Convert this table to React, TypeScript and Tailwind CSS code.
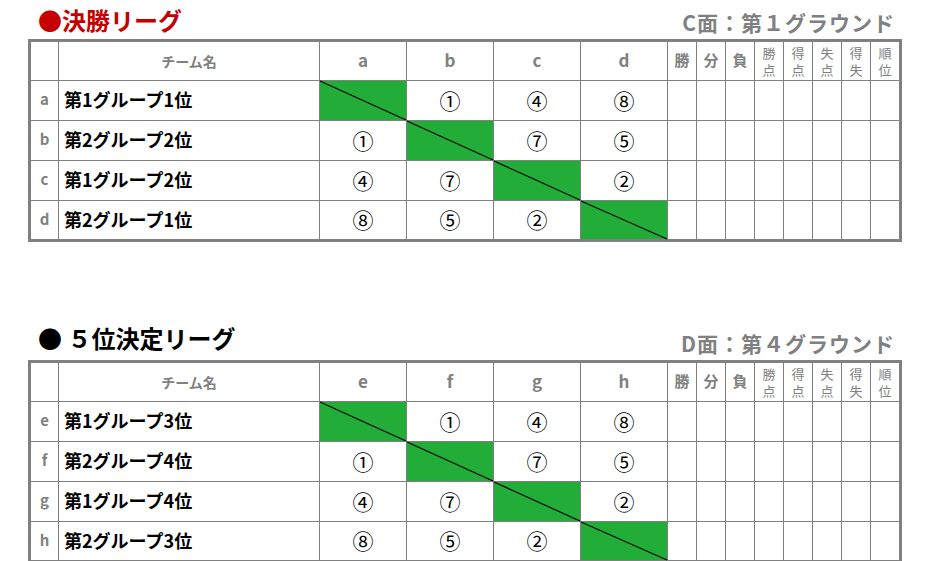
import React from "react";

const F = "font-['Noto_Sans_CJK_JP',sans-serif]";

type Sec = {
  letters: string[];
  teams: string[];
};

const matrix = [
  ["", "①", "④", "⑧"],
  ["①", "", "⑦", "⑤"],
  ["④", "⑦", "", "②"],
  ["⑧", "⑤", "②", ""],
];

function Green() {
  return (
    <div className="relative bg-[#22ac38]">
      <svg className="absolute inset-0 h-full w-full overflow-visible" viewBox="0 0 100 100" preserveAspectRatio="none">
        <line x1="0" y1="0" x2="100" y2="100" stroke="#000" strokeWidth="1.2" vectorEffect="non-scaling-stroke" />
      </svg>
    </div>
  );
}

function Table({ letters, teams }: Sec) {
  const small = [
    ["勝", "点"],
    ["得", "点"],
    ["失", "点"],
    ["得", "失"],
    ["順", "位"],
  ];
  return (
    <div className="ml-[28px] grid w-[874px] grid-cols-[27px_260px_86px_86px_86px_86px_28px_28px_28px_28px_28px_28px_28px_28px] grid-rows-[38px_39px_39px_39px_38px] gap-px border-[3px] border-[#808080] bg-[#808080]">
      <div className="bg-white" />
      <div className="flex items-center justify-center bg-white text-[14px] font-bold text-[#808080]">チーム名</div>
      {letters.map((l) => (
        <div key={l} className="flex items-center justify-center bg-white pb-[2px] text-[17px] font-bold text-[#808080]">
          {l}
        </div>
      ))}
      {["勝", "分", "負"].map((t) => (
        <div key={t} className="flex items-center justify-center bg-white pb-[2px] text-[15px] font-bold text-[#808080]">
          {t}
        </div>
      ))}
      {small.map((s, i) => (
        <div key={i} className="flex items-center justify-center bg-white text-center text-[13px] leading-[17px] text-[#808080]">
          <p className="w-[14px] break-all">{s[0] + s[1]}</p>
        </div>
      ))}
      {teams.map((t, r) => (
        <React.Fragment key={r}>
          <div className="flex items-center justify-center bg-white pb-[2px] text-[15px] font-bold text-[#808080]">{letters[r]}</div>
          <div className="flex items-center bg-white pb-[2px] pl-[5px] text-[18px] font-bold text-black">{t}</div>
          {matrix[r].map((m, c) =>
            m === "" ? (
              <Green key={c} />
            ) : (
              <div key={c} className="flex items-center justify-center bg-white pb-[1px] text-[21px] leading-none text-black">
                {m}
              </div>
            )
          )}
          {Array.from({ length: 8 }).map((_, k) => (
            <div key={"e" + k} className="bg-white" />
          ))}
        </React.Fragment>
      ))}
    </div>
  );
}

export default function App() {
  return (
    <div className={`${F} relative h-[561px] w-[929px] overflow-hidden bg-white`}>
      <div className="flex h-[39px] items-end justify-between pl-[38px] pr-[34px]">
        <div className="pb-[4px] text-[24px] font-bold leading-[30px] text-[#c40000]">●決勝リーグ</div>
        <div className="pb-[3px] text-[21px] font-bold leading-[28px] tracking-[1px] text-[#808080]">C面：第１グラウンド</div>
      </div>
      <Table
        letters={["a", "b", "c", "d"]}
        teams={["第1グループ1位", "第2グループ2位", "第1グループ2位", "第2グループ1位"]}
      />
      <div className="mt-[79px] flex h-[39px] items-end justify-between pl-[38px] pr-[34px]">
        <div className="pb-[7px] text-[24px] font-bold leading-[30px] text-black">● ５位決定リーグ</div>
        <div className="pb-[3px] text-[21px] font-bold leading-[28px] tracking-[1px] text-[#808080]">D面：第４グラウンド</div>
      </div>
      <Table
        letters={["e", "f", "g", "h"]}
        teams={["第1グループ3位", "第2グループ4位", "第1グループ4位", "第2グループ3位"]}
      />
    </div>
  );
}
